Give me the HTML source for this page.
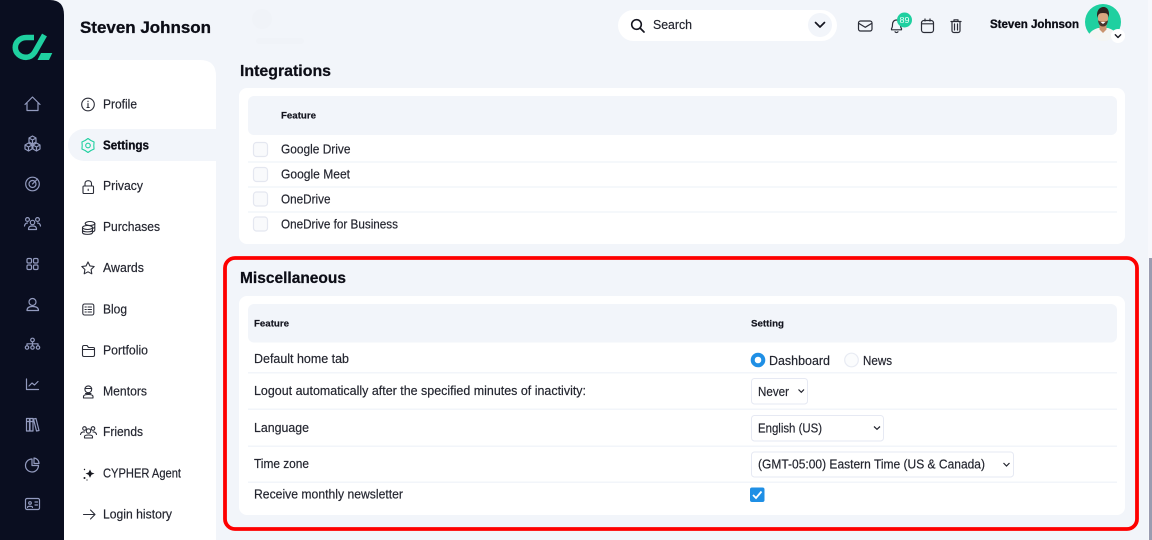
<!DOCTYPE html>
<html lang="en"><head><meta charset="utf-8"><title>Settings</title>
<style>
html,body{margin:0;padding:0;width:1152px;height:540px;overflow:hidden;background:#f2f5fa}
svg{display:block}
text{font-family:"Liberation Sans",sans-serif;fill:#23252f;stroke:#23252f;stroke-width:.18px;font-size:13px}
.b{font-weight:700;fill:#0c0d16;stroke:#0c0d16;stroke-width:.3px}
.h{font-weight:700;fill:#0c0d16;stroke:#0c0d16;stroke-width:.25px;font-size:16px}
.th{font-weight:700;fill:#14151f;stroke:#14151f;stroke-width:.2px;font-size:9.5px}
.ic{fill:none;stroke:#939bbf;stroke-width:1.2;stroke-linecap:round;stroke-linejoin:round}
.mi{fill:none;stroke:#2b2d38;stroke-width:1.1;stroke-linecap:round;stroke-linejoin:round}
.top{fill:none;stroke:#2a2c36;stroke-width:1.2;stroke-linecap:round;stroke-linejoin:round}
.sep{stroke:#f2f5fa;stroke-width:1.5}
.sel{fill:#fff;stroke:#e6e9f3;stroke-width:1}
.chk{fill:#f9fafc;stroke:#e4e7f0;stroke-width:1.2}
</style></head><body>
<svg width="1152" height="540" viewBox="0 0 1152 540" xmlns="http://www.w3.org/2000/svg">
<rect width="1152" height="540" fill="#f2f5fa"/>

<!-- left rail -->
<path d="M0 0H50Q64 0 64 15V540H0Z" fill="#0a0e20"/>
<path d="M34 37.500H26.500C20 37.500 15.300 42 15.300 47.500C15.300 53 20 57.300 26 57.300C30 57.300 32.500 55.500 34.500 52.500L44.500 35" fill="none" stroke="#1fd0a0" stroke-width="5.600"/>
<path d="M41 53H52.300L49 60H37.500Z" fill="#1fd0a0"/>
<g class="ic">
<path d="M25 104.500L32.500 97L40 104.500M27 103V110.500H38V103"/>
<path d="M32.500 136L36 138V142L32.500 144L29 142V138ZM29 138L32.500 140L36 138M32.500 140V144"/>
<path d="M28.500 143L32 145V149L28.500 151L25 149V145ZM25 145L28.500 147L32 145M28.500 147V151"/>
<path d="M36.500 143L40 145V149L36.500 151L33 149V145ZM33 145L36.500 147L40 145M36.500 147V151"/>
<circle cx="32.500" cy="184" r="6.800"/><circle cx="32.500" cy="184" r="3.500"/><path d="M32.500 184L37.500 179"/>
<circle cx="27.500" cy="219.500" r="1.900"/><circle cx="37.500" cy="219.500" r="1.900"/><circle cx="32.500" cy="222.500" r="2.200"/>
<path d="M24.500 226C25 223.500 26.500 223 27.500 223M40.500 226C40 223.500 38.500 223 37.500 223M28.500 229.500C28.500 226.500 30 226 32.500 226S36.500 226.500 36.500 229.500Z"/>
<rect x="27" y="258.500" width="4.500" height="4.500" rx="1.300"/><rect x="33.500" y="258.500" width="4.500" height="4.500" rx="1.300"/><rect x="27" y="265" width="4.500" height="4.500" rx="1.300"/><rect x="33.500" y="265" width="4.500" height="4.500" rx="1.300"/>
<circle cx="32.500" cy="302" r="3.500"/><path d="M27 310.500C27 307.500 29 306.500 32.500 306.500S38.500 307.500 38.500 310.500Z"/>
<circle cx="32.500" cy="340" r="1.800"/><circle cx="27" cy="347.500" r="1.700"/><circle cx="32.500" cy="347.500" r="1.700"/><circle cx="38" cy="347.500" r="1.700"/><path d="M32.500 342V345.800M27 345.800V343.800H38V345.800"/>
<path d="M26.500 379V389.500H38.500M29 386L32 383L34.500 385L38 381.500"/>
<path d="M26.500 418.500H29.500V431H26.500ZM30 418.500H33V431H30ZM33.500 419L36 418.500L39 430.500L36.500 431ZM26.500 421.500H33"/>
<path d="M31.500 459A6.500 6.500 0 1 0 38.500 465.500H32V459Z"/><path d="M34 458A5.500 5.500 0 0 1 39 463.500H34Z"/>
<rect x="25.500" y="498.500" width="14" height="11" rx="1.500"/><circle cx="30" cy="503" r="1.300"/><path d="M27.500 507.500C27.500 505.800 32.500 505.800 32.500 507.500M35 502H37.500M35 505H37.500"/>
</g>

<!-- top bar -->
<text class="b" x="80" y="33" style="font-size:17px" textLength="131" lengthAdjust="spacingAndGlyphs">Steven Johnson</text>
<rect x="618" y="10" width="219" height="31" rx="15.500" fill="#fff"/>
<circle cx="820" cy="25" r="12" fill="#f2f5fa"/>
<path d="M815.500 22.500L820 27L824.500 22.500" fill="none" stroke="#14151f" stroke-width="1.700" stroke-linecap="round" stroke-linejoin="round"/>
<circle cx="636.500" cy="24.500" r="4.800" fill="none" stroke="#14151f" stroke-width="1.600"/><path d="M640 28L644 32" stroke="#14151f" stroke-width="1.700" stroke-linecap="round"/>
<text x="653" y="29" textLength="39" lengthAdjust="spacingAndGlyphs">Search</text>
<g class="top">
<rect x="858.500" y="21" width="13.500" height="10" rx="2"/><path d="M859 23.500L865.200 27.300L871.500 23.500"/>
<path d="M891.500 28.500C892.500 27.500 892.500 26 892.500 24.500C892.500 22 894 20 896.500 20S900.500 22 900.500 24.500C900.500 26 900.500 27.500 901.500 28.500V29.800H891.500ZM895 31.800C895.800 32.800 897.200 32.800 898 31.800"/>
<rect x="921.500" y="20.500" width="12" height="12" rx="2.500"/><path d="M922 23.800H933M925 19V21M930 19V21"/>
<path d="M951 21.500H961M954 21.500V19.800H958V21.500M952 21.500V30.800C952 31.600 952.800 32.500 953.800 32.500H958.200C959.200 32.500 960 31.600 960 30.800V21.500M954.500 24V30M957.500 24V30"/>
</g>
<circle cx="904.500" cy="20" r="7.500" fill="#1fd0a0"/>
<text x="899.500" y="23" style="font-size:8.500px;fill:#eafff8;stroke:none" textLength="10" lengthAdjust="spacingAndGlyphs">89</text>
<text class="b" x="990" y="28" style="font-size:11.500px" textLength="89" lengthAdjust="spacingAndGlyphs">Steven Johnson</text>

<!-- avatar -->
<clipPath id="av"><path d="M1085 22A18 18 0 0 1 1121 22C1121 30 1118 40 1103 41C1090 40 1085 30 1085 22Z"/></clipPath>
<circle cx="1103" cy="22" r="18" fill="#1fd0a0"/>
<g clip-path="url(#av)">
<path d="M1087 44C1087 33 1092 30 1098 28H1108C1114 30 1119 33 1119 44Z" fill="#f4f5f3"/>
<path d="M1099.500 25V29.500L1103 33L1106.500 29.500V25Z" fill="#c9946f"/>
<ellipse cx="1103" cy="18" rx="5" ry="7.500" fill="#d9a680"/>
<path d="M1097.300 18C1096 10 1100 7 1103.500 7C1107 7 1110 10 1108.800 18C1108.300 14.500 1107.500 13 1103 13C1099 13 1098 14.500 1097.300 18Z" fill="#2f2320"/>
<path d="M1098 20C1098.500 25 1100.500 26.500 1103 26.500S1107.500 25 1108 20C1106.500 22.500 1099.500 22.500 1098 20Z" fill="#4a352c"/>
<path d="M1100.500 22H1105.500L1103 24Z" fill="#fff"/>
</g>
<circle cx="1118" cy="36" r="7" fill="#fff"/>
<path d="M1115.300 34.800L1118 37.500L1120.700 34.800" fill="none" stroke="#1a1b24" stroke-width="1.400" stroke-linecap="round" stroke-linejoin="round"/>

<!-- faint ghost -->
<circle cx="262" cy="19" r="10" fill="#f0f3f8"/>
<rect x="256" y="38" width="48" height="6" rx="3" fill="#f0f3f8"/>

<!-- settings menu -->
<path d="M64 60H200Q216 60 216 76V540H64Z" fill="#fff"/>
<path d="M216 129H84A16 16 0 0 0 84 161H216Z" fill="#f2f5fa"/>
<g class="mi">
<circle cx="88" cy="104.500" r="6.300"/><path d="M88 103.500V107.500M87 107.500H89.200M88 101.200V101.700"/>
<path d="M88 138.500L90.900 140.500L94.060 142L93.800 145.500L94.060 149L90.900 150.500L88 152.500L85.100 150.500L81.940 149L82.200 145.500L81.940 142L85.100 140.500Z" style="stroke:#1fd0a0"/><circle cx="88" cy="145.500" r="2.300" style="stroke:#1fd0a0"/>
<rect x="83" y="186" width="10.500" height="7.500" rx="1"/><path d="M85 186V183.500C85 179.700 91.500 179.700 91.500 183.500V186M88.200 189.200V190.500"/>
<ellipse cx="90" cy="223.500" rx="4.800" ry="2"/><path d="M94.800 223.500V230C94.800 231 94 231.500 93 231.800M94.800 226.500C94.800 227.300 94 228 93 228.200"/>
<ellipse cx="87.500" cy="227.500" rx="5" ry="2"/><path d="M82.500 227.500V232.500C82.500 235 92.500 235 92.500 232.500V227.500M82.500 230C82.500 232.500 92.500 232.500 92.500 230"/>
<path d="M88 262l1.900 3.900 4.300.6-3.100 3 .7 4.300L88 271.800l-3.800 2 .7-4.300-3.100-3 4.300-.6z"/>
<rect x="82.800" y="304" width="11" height="11" rx="1.800"/><path d="M85 307H86.300M85 309.500H86.300M85 312H86.300M88 307H91.500M88 309.500H91.500M88 312H91.500"/>
<path d="M82.500 347.500V355C82.500 356 83 356.500 84 356.500H93C94 356.500 94.500 356 94.500 355V348.500C94.500 348 94 347.500 93 347.500H88.500L87 345.500H84C83 345.500 82.500 346 82.500 347.500ZM82.500 349.500H94.500"/>
<circle cx="88.300" cy="389.300" r="3.400"/><path d="M85 388.500H91.500M85.500 393.500H91M83.500 398V396.500C83.500 395 85 394.500 88.300 394.500S93 395 93 396.500V398ZM83.500 398H93"/>
<circle cx="84.500" cy="428.500" r="1.800"/><circle cx="93" cy="428.500" r="1.800"/><circle cx="88.500" cy="431" r="2.200"/><path d="M80.500 434.500C81 432 83 431.800 84.500 432M96.500 434.500C96 432 94 431.800 93 432M84.500 438V436.500C84.500 434.500 92.500 434.500 92.500 436.500V438Z"/>
<path d="M83.500 514.500H94.500M90.500 510L95 514.500L90.500 519"/>
</g>
<path d="M90 469.500L91.500 472.500L94.500 473.500L91.500 474.700L90 477.800L88.500 474.700L85.500 473.500L88.500 472.500Z" fill="#16171f"/>
<circle cx="84.500" cy="469.500" r=".7" fill="#16171f"/><circle cx="84.500" cy="478" r="1" fill="#16171f"/><circle cx="87" cy="480" r=".6" fill="#16171f"/>

<text x="103" y="108.500" textLength="34" lengthAdjust="spacingAndGlyphs">Profile</text>
<text class="b" x="103" y="149.500" textLength="46" lengthAdjust="spacingAndGlyphs">Settings</text>
<text x="103" y="190" textLength="40" lengthAdjust="spacingAndGlyphs">Privacy</text>
<text x="103" y="231" textLength="57" lengthAdjust="spacingAndGlyphs">Purchases</text>
<text x="103" y="272" textLength="41" lengthAdjust="spacingAndGlyphs">Awards</text>
<text x="103" y="313.500" textLength="24" lengthAdjust="spacingAndGlyphs">Blog</text>
<text x="103" y="354.500" textLength="45" lengthAdjust="spacingAndGlyphs">Portfolio</text>
<text x="103" y="395.500" textLength="44" lengthAdjust="spacingAndGlyphs">Mentors</text>
<text x="103" y="436" textLength="40" lengthAdjust="spacingAndGlyphs">Friends</text>
<text x="103" y="477.500" textLength="78" lengthAdjust="spacingAndGlyphs">CYPHER Agent</text>
<text x="103" y="518.500" textLength="69" lengthAdjust="spacingAndGlyphs">Login history</text>

<!-- Integrations -->
<text class="h" x="240" y="76" textLength="91" lengthAdjust="spacingAndGlyphs">Integrations</text>
<rect x="239" y="88" width="886" height="156" rx="8" fill="#fff"/>
<rect x="248" y="96" width="869" height="39" rx="6" fill="#f2f5fa"/>
<text class="th" x="281" y="118.500" textLength="35" lengthAdjust="spacingAndGlyphs">Feature</text>
<path class="sep" d="M248 162H1117M248 187H1117M248 212H1117"/>
<rect class="chk" x="253.500" y="142.500" width="14" height="14" rx="3"/>
<rect class="chk" x="253.500" y="167.500" width="14" height="14" rx="3"/>
<rect class="chk" x="253.500" y="192" width="14" height="14" rx="3"/>
<rect class="chk" x="253.500" y="217" width="14" height="14" rx="3"/>
<text x="281" y="153.500" textLength="69.500" lengthAdjust="spacingAndGlyphs">Google Drive</text>
<text x="281" y="178.500" textLength="69" lengthAdjust="spacingAndGlyphs">Google Meet</text>
<text x="281" y="203.500" textLength="49.500" lengthAdjust="spacingAndGlyphs">OneDrive</text>
<text x="281" y="228.500" textLength="117" lengthAdjust="spacingAndGlyphs">OneDrive for Business</text>

<!-- Misc -->
<rect x="225" y="258" width="912" height="271" rx="10" fill="none" stroke="#fe0000" stroke-width="3.800"/>
<text class="h" x="240" y="283" textLength="106" lengthAdjust="spacingAndGlyphs">Miscellaneous</text>
<rect x="239" y="296" width="886" height="219" rx="8" fill="#fff"/>
<rect x="248" y="304" width="869" height="38.500" rx="6" fill="#f2f5fa"/>
<text class="th" x="254" y="326.500" textLength="35" lengthAdjust="spacingAndGlyphs">Feature</text>
<text class="th" x="751" y="326.500" textLength="33" lengthAdjust="spacingAndGlyphs">Setting</text>
<path class="sep" d="M248 372.700H1117M248 409.300H1117M248 446.300H1117M248 482.300H1117"/>
<text x="254" y="363" textLength="95" lengthAdjust="spacingAndGlyphs">Default home tab</text>
<text x="254" y="395" textLength="332" lengthAdjust="spacingAndGlyphs">Logout automatically after the specified minutes of inactivity:</text>
<text x="254" y="432" textLength="55" lengthAdjust="spacingAndGlyphs">Language</text>
<text x="254" y="468" textLength="55" lengthAdjust="spacingAndGlyphs">Time zone</text>
<text x="254" y="498.500" textLength="149" lengthAdjust="spacingAndGlyphs">Receive monthly newsletter</text>

<circle cx="758" cy="360" r="5.300" fill="#fff" stroke="#1f8fe5" stroke-width="4"/>
<text x="769" y="365" textLength="61" lengthAdjust="spacingAndGlyphs">Dashboard</text>
<circle cx="851.500" cy="360" r="6.800" fill="#fbfcfd" stroke="#e8ebf3" stroke-width="1.200"/>
<text x="863" y="365" textLength="29" lengthAdjust="spacingAndGlyphs">News</text>

<rect class="sel" x="751.500" y="378.500" width="56" height="25.500" rx="3"/>
<text x="758" y="396" textLength="31" lengthAdjust="spacingAndGlyphs">Never</text>
<path d="M798.500 389.500L801.300 392.300L804 389.500" fill="none" stroke="#22242e" stroke-width="1.200"/>
<rect class="sel" x="751.500" y="415.500" width="132" height="25.500" rx="3"/>
<text x="758" y="432.500" textLength="64" lengthAdjust="spacingAndGlyphs">English (US)</text>
<path d="M874 426.500L877 429.300L880 426.500" fill="none" stroke="#22242e" stroke-width="1.200"/>
<rect class="sel" x="751.500" y="452" width="262" height="25" rx="3"/>
<text x="758" y="468.500" textLength="227" lengthAdjust="spacingAndGlyphs">(GMT-05:00) Eastern Time (US &amp; Canada)</text>
<path d="M1003.500 463L1006.500 466L1009.500 463" fill="none" stroke="#22242e" stroke-width="1.200"/>

<rect x="750" y="487.500" width="14.500" height="14.500" rx="2" fill="#1f8fe5"/>
<path d="M753 495L756 498L761.500 491.500" fill="none" stroke="#fff" stroke-width="1.800"/>

<!-- scrollbar -->
<rect x="1148" y="0" width="4" height="540" fill="#f7f8fc"/>
<rect x="1149" y="258" width="3" height="282" fill="#9a9cb0"/>
</svg>
</body></html>
